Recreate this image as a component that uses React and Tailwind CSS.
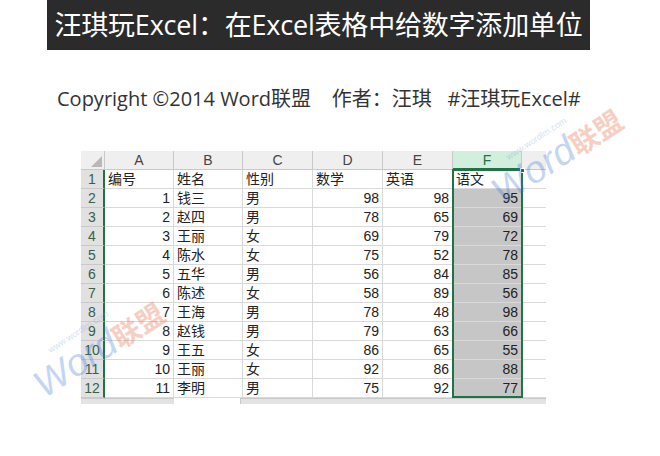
import React from 'react';

const cols = [
  { key: 'A', w: 'w-[69px]' },
  { key: 'B', w: 'w-[69px]' },
  { key: 'C', w: 'w-[70px]' },
  { key: 'D', w: 'w-[70px]' },
  { key: 'E', w: 'w-[70px]' },
  { key: 'F', w: 'w-[69px]' },
];

const rows = [
  ['1', '钱三', '男', '98', '98', '95'],
  ['2', '赵四', '男', '78', '65', '69'],
  ['3', '王丽', '女', '69', '79', '72'],
  ['4', '陈水', '女', '75', '52', '78'],
  ['5', '五华', '男', '56', '84', '85'],
  ['6', '陈述', '女', '58', '89', '56'],
  ['7', '王海', '男', '78', '48', '98'],
  ['8', '赵钱', '男', '79', '63', '66'],
  ['9', '王五', '女', '86', '65', '55'],
  ['10', '王丽', '女', '92', '86', '88'],
  ['11', '李明', '男', '75', '92', '77'],
];

const cjk = { fontFamily: '"Liberation Sans", "Noto Sans CJK SC", sans-serif' };

// faint site watermark, rotated over the sheet
const Watermark = ({ className }) => (
  <div className={`absolute pointer-events-none -rotate-[33deg] opacity-30 ${className}`}>
    <div className="text-[9px] text-[#7aa0d8] ml-[30px] -mb-[2px]" style={cjk}>www.wordlm.com</div>
    <div className="flex items-baseline leading-none">
      <span className="text-[38px] italic text-[#3c78d8]" style={{ fontFamily: '"Liberation Sans", sans-serif' }}>Word</span>
      <span className="text-[28px] font-bold text-[#e8623a]" style={cjk}>联盟</span>
    </div>
  </div>
);

const Cell = ({ w, children, align = 'left', bg = 'bg-white' }) => (
  <div
    className={`${w} h-[19px] shrink-0 border-r border-b border-[#d9d9d9] ${bg} px-[3px] text-[14px] leading-[18px] text-[#222] ${align === 'right' ? 'text-right' : 'text-left'}`}
    style={cjk}
  >
    {children}
  </div>
);

const RowHead = ({ n }) => (
  <div
    className="w-[24px] h-[19px] shrink-0 bg-[#e1e1e1] border-b border-[#c9c9c9] border-r-2 border-r-[#217346] text-center text-[14px] leading-[18px] text-[#3a5f48]"
    style={cjk}
  >
    {n}
  </div>
);

export default function App() {
  return (
    <div className="relative w-[660px] h-[456px] bg-white overflow-hidden">
      <div className="ml-[47px] w-[543px] h-[50px] bg-[#2b2b2b] flex items-center justify-center">
        <span className="text-white text-[27px] tracking-[-0.2px]" style={{ fontFamily: '"Open Sans", "Noto Sans CJK SC", sans-serif' }}>
          汪琪玩Excel：在Excel表格中给数字添加单位
        </span>
      </div>

      <div className="mt-[34px] ml-[57px] text-[20px] text-[#333] whitespace-pre" style={{ fontFamily: '"Open Sans", "Noto Sans CJK SC", sans-serif' }}>
        {'Copyright ©2014 Word联盟    作者：汪琪   #汪琪玩Excel#'}
      </div>

      <div className="relative mt-[37px] ml-[81px] w-[465px]">
        {/* column headers */}
        <div className="flex">
          <div className="relative w-[24px] h-[19px] shrink-0 bg-[#efefef] border-r border-b border-[#c9c9c9]">
            <div className="absolute right-[2px] bottom-[2px] w-0 h-0 border-l-[11px] border-l-transparent border-b-[11px] border-b-[#b8b8b8]" />
          </div>
          {cols.map((c) =>
            c.key === 'F' ? (
              <div key={c.key} className={`${c.w} h-[19px] shrink-0 bg-[#d2eedd] border-r border-[#c9c9c9] border-b-2 border-b-[#217346] text-center text-[14px] leading-[18px] text-[#217346]`} style={cjk}>
                {c.key}
              </div>
            ) : (
              <div key={c.key} className={`${c.w} h-[19px] shrink-0 bg-[#efefef] border-r border-b border-[#c9c9c9] text-center text-[14px] leading-[18px] text-[#444]`} style={cjk}>
                {c.key}
              </div>
            )
          )}
          <div className="w-[24px] h-[19px] shrink-0 bg-[#efefef] border-b border-[#c9c9c9]" />
        </div>

        {/* row 1 */}
        <div className="flex">
          <RowHead n="1" />
          {['编号', '姓名', '性别', '数学', '英语', '语文'].map((t, i) => (
            <Cell key={t} w={cols[i].w}>{t}</Cell>
          ))}
          <div className="w-[24px] h-[19px] shrink-0 border-b border-[#d9d9d9]" />
        </div>

        {rows.map((r, ri) => (
          <div key={ri} className="flex">
            <RowHead n={ri + 2} />
            {r.map((v, i) => (
              <Cell
                key={i}
                w={cols[i].w}
                align={i === 1 || i === 2 ? 'left' : 'right'}
                bg={i === 5 ? 'bg-[#c6c6c6]' : 'bg-white'}
              >
                {v}
              </Cell>
            ))}
            <div className="w-[24px] h-[19px] shrink-0 border-b border-[#d9d9d9]" />
          </div>
        ))}

        {/* selection outline on column F */}
        <div className="absolute left-[371px] top-[18px] w-[71px] h-[229px] border-2 border-[#217346] pointer-events-none" />
        <div className="absolute left-[439px] top-[17px] w-[5px] h-[5px] bg-[#217346] border border-white" />

        {/* bottom bars */}
        <div className="flex h-[6px]">
          <div className="w-[93px] bg-[#e3e3e3] border-t border-[#c9c9c9]" />
          <div className="w-[66px]" />
          <div className="flex-1 bg-[#e3e3e3] border-t border-l border-[#c9c9c9]" />
        </div>
      </div>

      <Watermark className="left-[480px] top-[125px]" />
      <Watermark className="left-[22px] top-[318px]" />
    </div>
  );
}
